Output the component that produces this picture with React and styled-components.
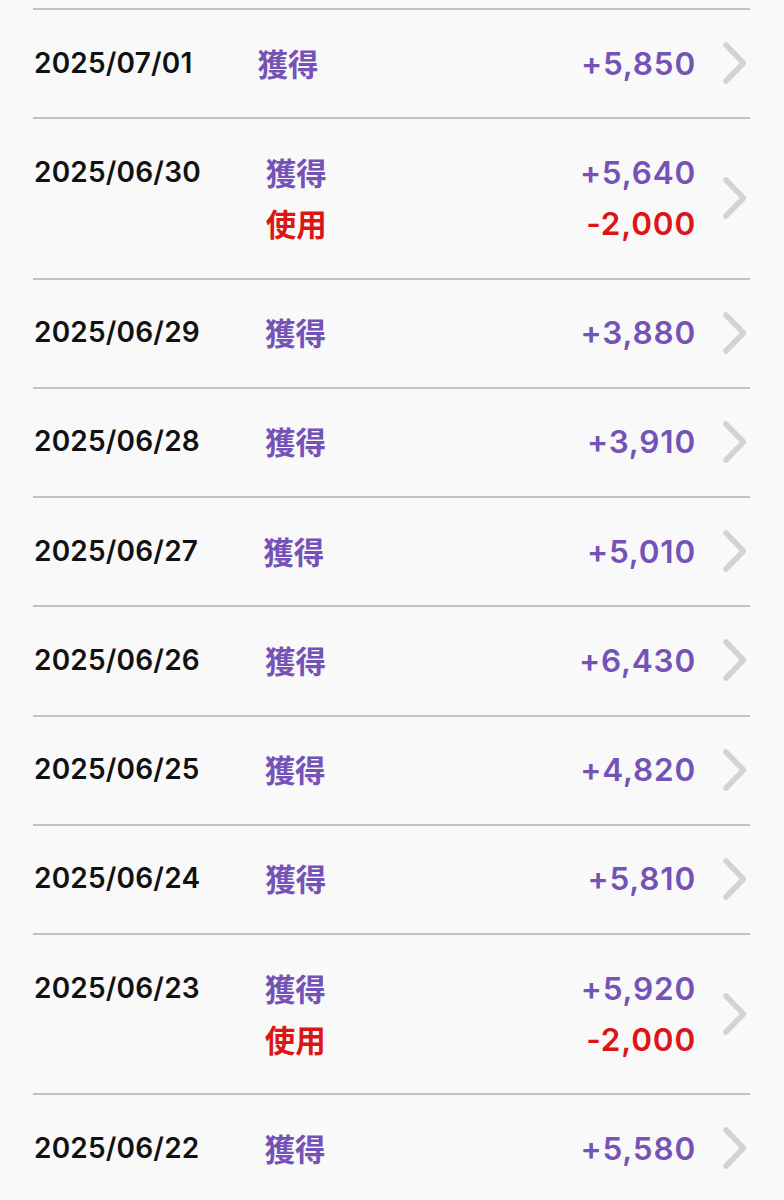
import React from "react";
import styled, { createGlobalStyle } from "styled-components";

const Global = createGlobalStyle`
  html, body { margin: 0; padding: 0; background: #f9f9f9; }
  body { font-family: Inter, "Noto Sans CJK JP", sans-serif; }
`;

const Page = styled.div`
  padding: 8px 34px 0 33px;
  background: #f9f9f9;
  min-height: 1200px;
  box-sizing: border-box;
`;

const List = styled.ul`
  list-style: none;
  margin: 0;
  padding: 0;
`;

const Row = styled.li`
  display: flex;
  align-items: center;
  border-top: 2px solid #c2c2c2;
  padding: 27.5px 0 28.75px 1px;
`;

const DateText = styled.div`
  align-self: flex-start;
  font-family: Inter, sans-serif;
  font-weight: 600;
  font-size: 28px;
  line-height: 51px;
  letter-spacing: 0.2px;
  color: #111;
  margin-right: 65px;
  white-space: nowrap;
`;

const Entries = styled.div`
  flex: 1;
  display: flex;
  flex-direction: column;
`;

const Entry = styled.div`
  display: flex;
  justify-content: space-between;
  align-items: center;
  height: 51px;
  color: ${(p) => (p.$use ? "#dc1515" : "#7553b6")};
`;

const Label = styled.span`
  font-family: "Noto Sans CJK JP", sans-serif;
  font-weight: 700;
  font-size: 30.5px;
  line-height: 51px;
`;

const Amount = styled.span`
  font-family: Inter, sans-serif;
  font-weight: 600;
  font-size: 31.5px;
  line-height: 51px;
  letter-spacing: 0.8px;
`;

const ChevronBox = styled.div`
  width: 28px;
  height: 46px;
  margin-left: 26px;
  display: flex;
  align-items: center;
  justify-content: center;
`;

const Chevron = () => (
  <ChevronBox>
    <svg width="28" height="46" viewBox="0 0 28 46">
      <path
        d="M4 5 L21.5 23 L4 41"
        fill="none"
        stroke="#d3d3d3"
        strokeWidth="5.5"
        strokeLinecap="round"
        strokeLinejoin="round"
      />
    </svg>
  </ChevronBox>
);

const data = [
  { date: "2025/07/01", items: [["獲得", "+5,850"]] },
  { date: "2025/06/30", items: [["獲得", "+5,640"], ["使用", "-2,000"]] },
  { date: "2025/06/29", items: [["獲得", "+3,880"]] },
  { date: "2025/06/28", items: [["獲得", "+3,910"]] },
  { date: "2025/06/27", items: [["獲得", "+5,010"]] },
  { date: "2025/06/26", items: [["獲得", "+6,430"]] },
  { date: "2025/06/25", items: [["獲得", "+4,820"]] },
  { date: "2025/06/24", items: [["獲得", "+5,810"]] },
  { date: "2025/06/23", items: [["獲得", "+5,920"], ["使用", "-2,000"]] },
  { date: "2025/06/22", items: [["獲得", "+5,580"]] },
];

export default function App() {
  return (
    <>
      <Global />
      <Page>
        <List>
          {data.map((row) => (
            <Row key={row.date}>
              <DateText>{row.date}</DateText>
              <Entries>
                {row.items.map(([label, amount]) => (
                  <Entry key={label} $use={label === "使用"}>
                    <Label>{label}</Label>
                    <Amount>{amount}</Amount>
                  </Entry>
                ))}
              </Entries>
              <Chevron />
            </Row>
          ))}
        </List>
      </Page>
    </>
  );
}
